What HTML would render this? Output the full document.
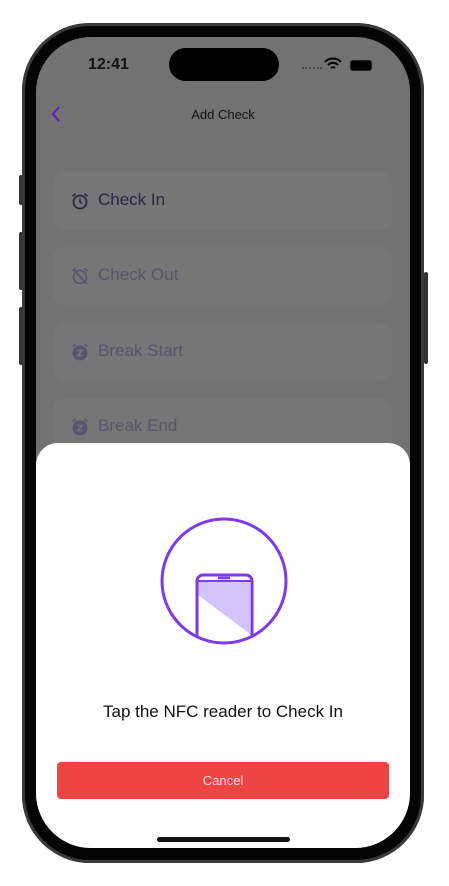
<!DOCTYPE html>
<html><head><meta charset="utf-8"><style>
body{margin:0;width:449px;height:886px;background:#fff;position:relative;overflow:hidden;font-family:"Liberation Sans",sans-serif}
.frame{position:absolute;left:22px;top:23px;width:402px;height:840px;border-radius:68px;background:#050505;box-shadow:inset 0 0 0 3px #3a3a3a}
.screen{position:absolute;left:36px;top:37px;width:374px;height:811px;border-radius:55px;background:#727272;overflow:hidden}
.card{position:absolute;left:17px;width:339px;height:58px;border-radius:12px;background:#767677}
.card span{position:absolute;left:45px;top:18px;font-size:17px;color:#55556a}
.sheet{position:absolute;left:0;top:406px;width:374px;height:420px;background:#fff;border-radius:22px 22px 0 0}
</style></head><body>
<div style="position:absolute;left:19px;top:175px;width:4px;height:30px;background:#333;border-radius:2px"></div>
<div style="position:absolute;left:19px;top:232px;width:4px;height:58px;background:#333;border-radius:2px"></div>
<div style="position:absolute;left:19px;top:307px;width:4px;height:58px;background:#333;border-radius:2px"></div>
<div style="position:absolute;left:424px;top:272px;width:4px;height:92px;background:#333;border-radius:2px"></div>
<div class="frame"></div>
<div class="screen">
 <div style="position:absolute;left:52px;top:19px;font-size:16px;font-weight:bold;color:#111">12:41</div>
 <div style="position:absolute;left:133px;top:11px;width:110px;height:33px;border-radius:17px;background:#000"></div>
 <div style="position:absolute;left:266px;top:30px;width:20px;height:2px;border-top:2px dotted #444"></div>
 <svg style="position:absolute;left:288px;top:20px" width="18" height="14" viewBox="0 0 18 14"><path d="M1 5a11 11 0 0 1 16 0M4 8a7 7 0 0 1 10 0M7 11a3 3 0 0 1 4 0" stroke="#000" stroke-width="2" fill="none"/></svg>
 <div style="position:absolute;left:314px;top:23px;width:20px;height:9px;border-radius:3px;background:#000;border:1px solid #222"></div>
 <svg style="position:absolute;left:14px;top:68px" width="12" height="18"><path d="M9 2L3 9l6 7" stroke="#5b21b6" stroke-width="2" fill="none"/></svg>
 <div style="position:absolute;left:0;width:374px;top:70px;text-align:center;font-size:13px;color:#111">Add Check</div>
 <div class="card" style="top:135px"><svg style="position:absolute;left:18px;top:20px" width="18" height="18" viewBox="0 0 18 18"><circle cx="9" cy="10" r="6.5" stroke="#2a2540" stroke-width="1.8" fill="none"/><path d="M9 6.5V10l2 1.5M1.5 4l3-2.5M16.5 4l-3-2.5" stroke="#2a2540" stroke-width="1.6" fill="none"/></svg><span style="color:#2a2540">Check In</span></div>
 <div class="card" style="top:210px"><svg style="position:absolute;left:18px;top:20px" width="18" height="18" viewBox="0 0 18 18"><circle cx="9" cy="10" r="6.5" stroke="#55556a" stroke-width="1.6" fill="none"/><path d="M2 2l14 15M1.5 4l3-2.5M16.5 4l-3-2.5" stroke="#55556a" stroke-width="1.6" fill="none"/></svg><span>Check Out</span></div>
 <div class="card" style="top:286px"><svg style="position:absolute;left:18px;top:20px" width="18" height="18" viewBox="0 0 18 18"><circle cx="9" cy="10" r="7.5" fill="#55556a"/><path d="M6.5 7.5h5l-5 5h5" stroke="#777" stroke-width="1.4" fill="none"/><path d="M1.5 3.5l3-2.5M16.5 3.5l-3-2.5" stroke="#55556a" stroke-width="1.6"/></svg><span>Break Start</span></div>
 <div class="card" style="top:361px"><svg style="position:absolute;left:18px;top:20px" width="18" height="18" viewBox="0 0 18 18"><circle cx="9" cy="10" r="7.5" fill="#55556a"/><path d="M6.5 7.5h5l-5 5h5" stroke="#777" stroke-width="1.4" fill="none"/><path d="M1.5 3.5l3-2.5M16.5 3.5l-3-2.5" stroke="#55556a" stroke-width="1.6"/></svg><span>Break End</span></div>
 <div class="sheet">
  <svg style="position:absolute;left:122px;top:72px" width="132" height="132" viewBox="0 0 132 132"><defs><clipPath id="c"><circle cx="66" cy="66" r="62"/></clipPath></defs>
   <g clip-path="url(#c)"><path d="M40 66h52v53L40 80z" fill="#d4c2fb"/><path d="M39 140V66a6 6 0 0 1 6-6h43a6 6 0 0 1 6 6v74" stroke="#7c3aed" stroke-width="3" fill="none"/><path d="M40 66h53" stroke="#7c3aed" stroke-width="2"/><path d="M60 63h12" stroke="#7c3aed" stroke-width="2.5"/></g>
   <circle cx="66" cy="66" r="62" stroke="#7c3aed" stroke-width="3" fill="none"/></svg>
  <div style="position:absolute;left:0;width:374px;top:259px;text-align:center;font-size:17px;color:#111">Tap the NFC reader to Check In</div>
  <div style="position:absolute;left:21px;top:319px;width:332px;height:37px;background:#ef4444;border-radius:4px;color:#fde;font-size:13px;text-align:center;line-height:37px">Cancel</div>
 </div>
 <div style="position:absolute;left:121px;top:800px;width:133px;height:5px;border-radius:3px;background:#111"></div>
</div>
</body></html>
